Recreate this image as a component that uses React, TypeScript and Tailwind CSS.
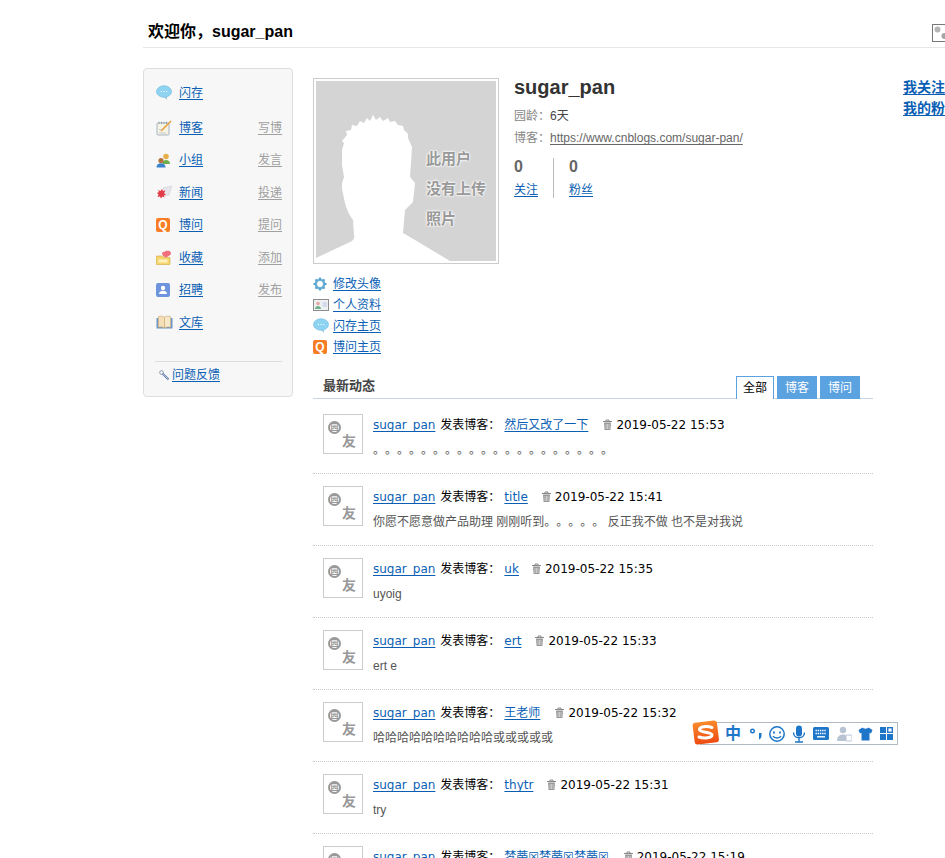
import React from "react";

const linkCls = "text-[#0a5fb4] underline underline-offset-2";

const Bubble = () => (
  <svg width="16" height="15" viewBox="0 0 16 15">
    <ellipse cx="8" cy="6.500" rx="7.500" ry="5.800" fill="#8fd3f2" stroke="#6bb7dc" strokeWidth="0.6" />
    <path d="M8 12l3 2.800v-3z" fill="#8fc9e6" />
    <path d="M5 6.500h1M7.600 6.500h1M10.200 6.500h1" stroke="#fff" strokeWidth="1" />
  </svg>
);
const Note = () => (
  <svg width="17" height="16" viewBox="0 0 17 16">
    <rect x="1" y="3" width="12" height="12" rx="1" fill="#f6f3e2" stroke="#a9b4c4" />
    <path d="M3 1.800v2M5.500 1.800v2M8 1.800v2M10.500 1.800v2" stroke="#8a97aa" />
    <path d="M5 11L15 1" stroke="#e6a13c" strokeWidth="1.600" />
    <path d="M3 13h7M3 9.500h3" stroke="#c6cbd4" />
  </svg>
);
const Users = () => (
  <svg width="15" height="15" viewBox="0 0 15 15">
    <circle cx="10" cy="3.500" r="2.800" fill="#e8b04a" />
    <path d="M6.500 11c0-3 1.500-4 3.500-4s4 1 4 4z" fill="#6fae4c" />
    <circle cx="5" cy="7.500" r="2.600" fill="#b5733c" />
    <path d="M.5 14.500c0-3 2-4.200 4.500-4.200s4.500 1.200 4.500 4.200z" fill="#3c82cc" />
  </svg>
);
const News = () => (
  <svg width="17" height="15" viewBox="0 0 17 15">
    <path d="M7 3l9-2-3 9-6 1z" fill="#e6e6ea" stroke="#c8c8d0" strokeWidth="0.5" />
    <path d="M1 8l2-1-1-2 2.500 1L6 4l1 2 2.500-.5L8 8l2 1.500-2 .7.500 2.300-2-1-1.500 2-1-2-2.500.5 1-2.500z" fill="#e23c46" />
  </svg>
);
const QIcon = () => (
  <span className="flex h-[14px] w-[14px] items-center justify-center rounded-[2px] bg-[#f97d24] text-[12px] font-bold leading-none text-white">
    Q
  </span>
);
const Fav = () => (
  <svg width="16" height="15" viewBox="0 0 16 15">
    <path d="M.5 6h6l1 1.500h6.500v7H.5z" fill="#f6d56c" stroke="#d2a93c" strokeWidth="0.6" />
    <path d="M8 6.500C5 4.500 6 1 8.500 2c.5-1.500 6-2 6.500 1 .3 2-3 3.500-5 4.500z" fill="#ef6f7c" />
    <rect x="2.500" y="9.500" width="9" height="3" fill="#fdf0bd" />
  </svg>
);
const Job = () => (
  <svg width="14" height="14" viewBox="0 0 14 14">
    <rect width="14" height="14" rx="2" fill="#6f94de" />
    <circle cx="7" cy="5" r="2.200" fill="#fff" />
    <path d="M3 11c0-2.500 2-3.200 4-3.200s4 .7 4 3.200z" fill="#fff" />
  </svg>
);
const Book = () => (
  <svg width="17" height="15" viewBox="0 0 17 15">
    <path d="M.5 3h2v9h6v1.500H.5zM16.500 3h-2v9h-6v1.500h8z" fill="#6d97c8" />
    <path d="M2.500 1.500c2-.6 4.500-.4 6 .8V13c-1.500-1-4-1.200-6-.8z" fill="#f3dfb8" stroke="#c9a36a" strokeWidth="0.6" />
    <path d="M14.500 1.500c-2-.6-4.500-.4-6 .8V13c1.500-1 4-1.200 6-.8z" fill="#f6e8c9" stroke="#c9a36a" strokeWidth="0.6" />
  </svg>
);
const Wrench = () => (
  <svg width="11" height="11" viewBox="0 0 11 11">
    <path d="M2.500 2.500l7 7" stroke="#5f7fae" strokeWidth="2" />
    <circle cx="2.500" cy="2.500" r="1.800" fill="#fff" stroke="#7f8fa8" />
    <path d="M4 4l5.500 5.500" stroke="#c7d4e6" strokeWidth="0.7" />
  </svg>
);
const Gear = () => (
  <svg width="14" height="14" viewBox="0 0 14 14">
    <circle cx="7" cy="7" r="4.200" fill="none" stroke="#6fb2d8" strokeWidth="2.600" />
    <path d="M7 .5v2.400M7 11v2.500M.5 7h2.400M11 7h2.500M2.400 2.400l1.700 1.700M9.900 9.900l1.700 1.700M11.600 2.400L9.900 4.100M4.100 9.900l-1.700 1.700" stroke="#5aa5cf" strokeWidth="2" />
  </svg>
);
const Card = () => (
  <svg width="16" height="12" viewBox="0 0 16 12">
    <rect x=".5" y=".5" width="15" height="11" fill="#eef0f2" stroke="#8d8d8d" />
    <circle cx="5" cy="4.500" r="1.800" fill="#e2a6a0" />
    <path d="M2 10c0-2 1.500-3 3-3s3 1 3 3z" fill="#6fb08a" />
    <rect x="9.500" y="3" width="4.500" height="5" fill="#d3dced" />
  </svg>
);
const Trash = () => (
  <svg width="11" height="12" viewBox="0 0 11 12" className="shrink-0">
    <path d="M1 2.500h9M4 2.500V1h3v1.500" stroke="#888" fill="none" />
    <path d="M2 3.500h7l-.6 7.500H2.600z" fill="#999" />
    <path d="M4 5v5M5.500 5v5M7 5v5" stroke="#eee" strokeWidth="0.6" />
  </svg>
);

const Silhouette = () => (
  <svg width="180" height="180" viewBox="0 0 180 180" className="block">
    <path
      d="M0 177L36 160Q39 157 38 154L37 139Q31 131 29 122L26 108 26 102 28 96 26 84 26 69 28 62 26 60 31 54 30 50 35 49 36 44 41 45 44 40 48 42 51 37 54 40 57 34 60 39 64 36 67 40 72 37 74 41 79 40 82 44 87 45 88 49 92 53 92 57 96 66 95 82 94 96 99 102 97 121 89 129 87 152 99 159 134 180 0 180z"
      fill="#fff"
    />
  </svg>
);

const noPhoto = "[text-shadow:0_0_2px_#fff,0_0_2px_#fff,0_0_3px_#fff]";

const SideRow = ({ icon, name, action, first }: { icon: React.ReactNode; name: string; action?: string; first?: boolean }) => (
  <li className={`flex h-[32.5px] items-center ${first ? "mb-[2.5px]" : ""}`}>
    <span className="flex w-[24px] shrink-0 pl-px">{icon}</span>
    <a className={linkCls}>{name}</a>
    {action && <a className="ml-auto text-[#a0a0a0] underline underline-offset-2">{action}</a>}
  </li>
);

const sideItems = [
  { icon: <Bubble />, name: "闪存" },
  { icon: <Note />, name: "博客", action: "写博" },
  { icon: <Users />, name: "小组", action: "发言" },
  { icon: <News />, name: "新闻", action: "投递" },
  { icon: <QIcon />, name: "博问", action: "提问" },
  { icon: <Fav />, name: "收藏", action: "添加" },
  { icon: <Job />, name: "招聘", action: "发布" },
  { icon: <Book />, name: "文库" },
];

const ProfileLink = ({ icon, text }: { icon: React.ReactNode; text: string }) => (
  <li className="flex h-[21px] items-center">
    <span className="flex w-[20px] shrink-0">{icon}</span>
    <a className={linkCls}>{text}</a>
  </li>
);

const feed = [
  { title: "然后又改了一下", time: "2019-05-22 15:53", gap: "ml-[14px]", text: "。。。。。。。。。。。。。。。。。。。。" },
  { title: "title", time: "2019-05-22 15:41", gap: "ml-[13px]", text: "你愿不愿意做产品助理 刚刚听到。。。。。 反正我不做 也不是对我说" },
  { title: "uk", time: "2019-05-22 15:35", gap: "ml-[12px]", text: "uyoig" },
  { title: "ert", time: "2019-05-22 15:33", gap: "ml-[13px]", text: "ert e" },
  { title: "王老师", time: "2019-05-22 15:32", gap: "ml-[14px]", text: "哈哈哈哈哈哈哈哈哈哈或或或或或" },
  { title: "thytr", time: "2019-05-22 15:31", gap: "ml-[13px]", text: "try" },
  { title: "梦蒂☒梦蒂☒梦蒂☒", time: "2019-05-22 15:19", gap: "ml-[14px]", text: "" },
];

const SmallAvatar = () => (
  <div className="relative h-[40px] w-[40px] shrink-0 border border-[#ccc] bg-white font-bold text-[#999]">
    <span className="absolute left-[4px] top-[6px] flex h-[13px] w-[13px] items-center justify-center rounded-full border-2 border-[#999] text-[8px] leading-none">
      园
    </span>
    <span className="absolute left-[18px] top-[19px] text-[14px] leading-[14px]">友</span>
  </div>
);

const FeedItem = ({ title, time, gap, text }: (typeof feed)[number]) => (
  <li className="flex h-[72px] gap-[10px] border-b border-dotted border-[#ccc] px-[10px] pt-[12px]">
    <SmallAvatar />
    <div className="pt-px">
      <div className="flex h-[20px] items-center whitespace-nowrap font-['DejaVu_Sans','Noto_Sans_CJK_SC',sans-serif] text-[12px] text-black">
        <a className="text-[#0a5fb4] underline underline-offset-2">sugar_pan</a>
        <span className="ml-[5px] mr-[4px]">发表博客：</span>
        <a className="text-[#0a5fb4] underline underline-offset-2">{title}</a>
        <span className={`${gap} mr-[3px]`}>
          <Trash />
        </span>
        <span>{time}</span>
      </div>
      <p className="mt-[5px] whitespace-nowrap text-[12px] leading-[20px] text-[#555] [text-spacing-trim:space-all]">{text}</p>
    </div>
  </li>
);

const ImeBar = () => (
  <div className="absolute left-[692px] top-[719px] h-[27px] w-[206px]">
    <div className="absolute bottom-[1px] left-[8px] right-0 top-[3px] flex items-center border border-[#b4bac4] bg-white pl-[24px] text-[#1e76c8]">
      <span className="w-[17px] text-[16px] font-bold leading-none">中</span>
      <svg width="16" height="16" viewBox="0 0 16 16" className="ml-[7px]">
        <circle cx="3.500" cy="5" r="1.800" fill="none" stroke="#1e76c8" strokeWidth="1.400" />
        <path d="M10 7h2.500v2.500c0 2-1 3.500-2.500 4z" fill="#1e76c8" />
      </svg>
      <svg width="18" height="18" viewBox="0 0 18 18" className="ml-[3px]" fill="none" stroke="#1e76c8" strokeWidth="1.500">
        <circle cx="9" cy="9" r="7.200" />
        <path d="M6 6.500v2M12 6.500v2" strokeWidth="1.800" />
        <path d="M5 11c1.500 2.800 6.500 2.800 8 0" />
      </svg>
      <svg width="14" height="18" viewBox="0 0 14 18" className="ml-[6px]" fill="#1e76c8">
        <rect x="4" y="0.500" width="6" height="11" rx="3" />
        <path d="M1.500 7.500c0 7 11 7 11 0M7 13v3.500M3 17h8" fill="none" stroke="#1e76c8" strokeWidth="1.400" />
      </svg>
      <svg width="16" height="13" viewBox="0 0 16 13" className="ml-[7px]">
        <rect width="16" height="13" rx="1.500" fill="#1e76c8" />
        <path d="M2.500 3.500h11M2.500 6.500h11" stroke="#fff" strokeWidth="1.400" strokeDasharray="1.400 0.800" />
        <path d="M4 9.800h8" stroke="#fff" strokeWidth="1.400" />
      </svg>
      <svg width="15" height="16" viewBox="0 0 15 16" className="ml-[8px]" fill="#b8c4d4">
        <circle cx="6" cy="4" r="3.200" />
        <path d="M0 15c0-5 3-6.500 6-6.500 1.500 0 2.500.3 3.500 1V15z" />
        <rect x="9" y="9" width="6" height="6" rx="1" fill="#fff" stroke="#b8c4d4" />
      </svg>
      <svg width="15" height="14" viewBox="0 0 15 14" className="ml-[6px]" fill="#1e76c8">
        <path d="M4.500.5L.5 3 2 6.500l1.500-.7v7.700h8V5.800l1.500.7L14.500 3l-4-2.500C9.800 2 5.200 2 4.500.5z" />
      </svg>
      <svg width="13" height="13" viewBox="0 0 13 13" className="ml-[7px]" fill="#1e76c8">
        <rect width="6" height="6" />
        <rect x="7.700" y=".7" width="4.600" height="4.600" fill="none" stroke="#1e76c8" strokeWidth="1.400" />
        <rect y="7" width="6" height="6" />
        <rect x="7" y="7" width="6" height="6" />
      </svg>
    </div>
    <svg width="28" height="27" viewBox="0 0 28 27" className="absolute left-0 top-0">
      <defs>
        <linearGradient id="sg" x1="0" y1="0" x2="0" y2="1">
          <stop offset="0" stopColor="#f98a2c" />
          <stop offset="1" stopColor="#ee4b12" />
        </linearGradient>
      </defs>
      <rect x="1.500" y="2.500" width="24.500" height="22" rx="3" fill="url(#sg)" transform="rotate(-7 14 13)" />
      <path d="M20 8.500C15 6.800 7.500 7.500 7.500 10.500c0 3.500 12.500 2 12.500 5.500 0 3-7.500 3.800-13 2" fill="none" stroke="#fff" strokeWidth="3" strokeLinecap="round" />
    </svg>
  </div>
);

export default function App() {
  return (
    <div className="relative h-[858px] w-[945px] overflow-hidden bg-white font-['Liberation_Sans','Noto_Sans_CJK_SC',sans-serif] text-[12px] text-[#333]">
      <div className="w-[1100px] pl-[143px]">
        <header className="flex h-[48px] w-[957px] items-start border-b border-[#e6e6e6] pl-[5px] pt-[22px]">
          <h1 className="text-[16px] font-bold leading-[20px] text-black">欢迎你，sugar_pan</h1>
          <svg width="18" height="18" viewBox="0 0 18 18" className="ml-[639px] mt-[2px]">
            <rect x=".5" y=".5" width="17" height="17" fill="#fff" stroke="#777" />
            <circle cx="5.500" cy="5.500" r="3" fill="#b5b5b5" />
            <circle cx="12.500" cy="12" r="3" fill="#a5a5a5" />
          </svg>
        </header>

        <div className="mt-[20px] flex items-start">
          <aside className="h-[329px] w-[150px] shrink-0 rounded-[4px] border border-[#ddd] bg-[#f7f7f7] pl-[11px] pr-[10px] pt-[7.5px]">
            <ul>
              {sideItems.map((it, i) => (
                <SideRow key={it.name} {...it} first={i === 0} />
              ))}
            </ul>
            <div className="mt-[21.500px] flex h-[28px] items-center border-t border-[#ddd] pl-[4px]">
              <Wrench />
              <a className={`${linkCls} ml-[2px]`}>问题反馈</a>
            </div>
          </aside>

          <main className="ml-[20px] w-[560px] shrink-0 pt-[10px]">
            <div className="flex">
              <div>
                <div className="relative h-[186px] w-[186px] border border-[#ccc] p-[2px]">
                  <div className="h-[180px] w-[180px] bg-[#d4d4d4]">
                    <Silhouette />
                  </div>
                  <div className={`absolute left-[112px] top-[65px] whitespace-nowrap text-[15px] font-bold leading-[30px] text-[#999] ${noPhoto}`}>
                    <div>此用户</div>
                    <div>没有上传</div>
                    <div>照片</div>
                  </div>
                </div>
                <ul className="mt-[9px]">
                  <ProfileLink icon={<Gear />} text="修改头像" />
                  <ProfileLink icon={<Card />} text="个人资料" />
                  <ProfileLink icon={<Bubble />} text="闪存主页" />
                  <ProfileLink icon={<QIcon />} text="博问主页" />
                </ul>
              </div>
              <div className="ml-[15px]">
                <h2 className="-mt-px text-[20px] font-bold leading-[20px] text-[#333]">sugar_pan</h2>
                <p className="mt-[9px] leading-[20px] text-[#888]">
                  园龄：<span className="text-[#444]">6天</span>
                </p>
                <p className="mt-[2px] leading-[20px] text-[#888]">
                  博客：<a className="text-[#666] underline underline-offset-2">https://www.cnblogs.com/sugar-pan/</a>
                </p>
                <div className="mt-[10px] flex">
                  <div className="h-[40px] w-[40px] border-r border-[#bbb]">
                    <div className="text-[16px] font-bold leading-[18px] text-[#666]">0</div>
                    <a className={`${linkCls} mt-[5px] block leading-[18px]`}>关注</a>
                  </div>
                  <div className="ml-[15px]">
                    <div className="text-[16px] font-bold leading-[18px] text-[#666]">0</div>
                    <a className={`${linkCls} mt-[5px] block leading-[18px]`}>粉丝</a>
                  </div>
                </div>
              </div>
            </div>

            <section className="mt-[15px]">
              <div className="flex h-[27px] items-end border-b border-[#c6d5e6] pl-[10px]">
                <h3 className="mb-[4px] text-[13px] font-bold leading-[16px] text-[#444]">最新动态</h3>
                <div className="-mb-px ml-auto mr-[13px] flex gap-[3px]">
                  <span className="flex h-[23px] w-[38px] items-center justify-center border border-b-0 border-[#5ba2e0] bg-white text-black">全部</span>
                  <span className="flex h-[23px] w-[40px] items-center justify-center bg-[#5ba2e0] text-white">博客</span>
                  <span className="flex h-[23px] w-[40px] items-center justify-center bg-[#5ba2e0] text-white">博问</span>
                </div>
              </div>
              <ul className="mt-[3px]">
                {feed.map((f) => (
                  <FeedItem key={f.time} {...f} />
                ))}
              </ul>
            </section>
          </main>

          <div className="ml-[30px] whitespace-nowrap pt-[9px] text-[14px] font-bold leading-[21px]">
            <a className={`${linkCls} block`}>我关注的人</a>
            <a className={`${linkCls} block`}>我的粉丝</a>
          </div>
        </div>
      </div>
      <ImeBar />
    </div>
  );
}
